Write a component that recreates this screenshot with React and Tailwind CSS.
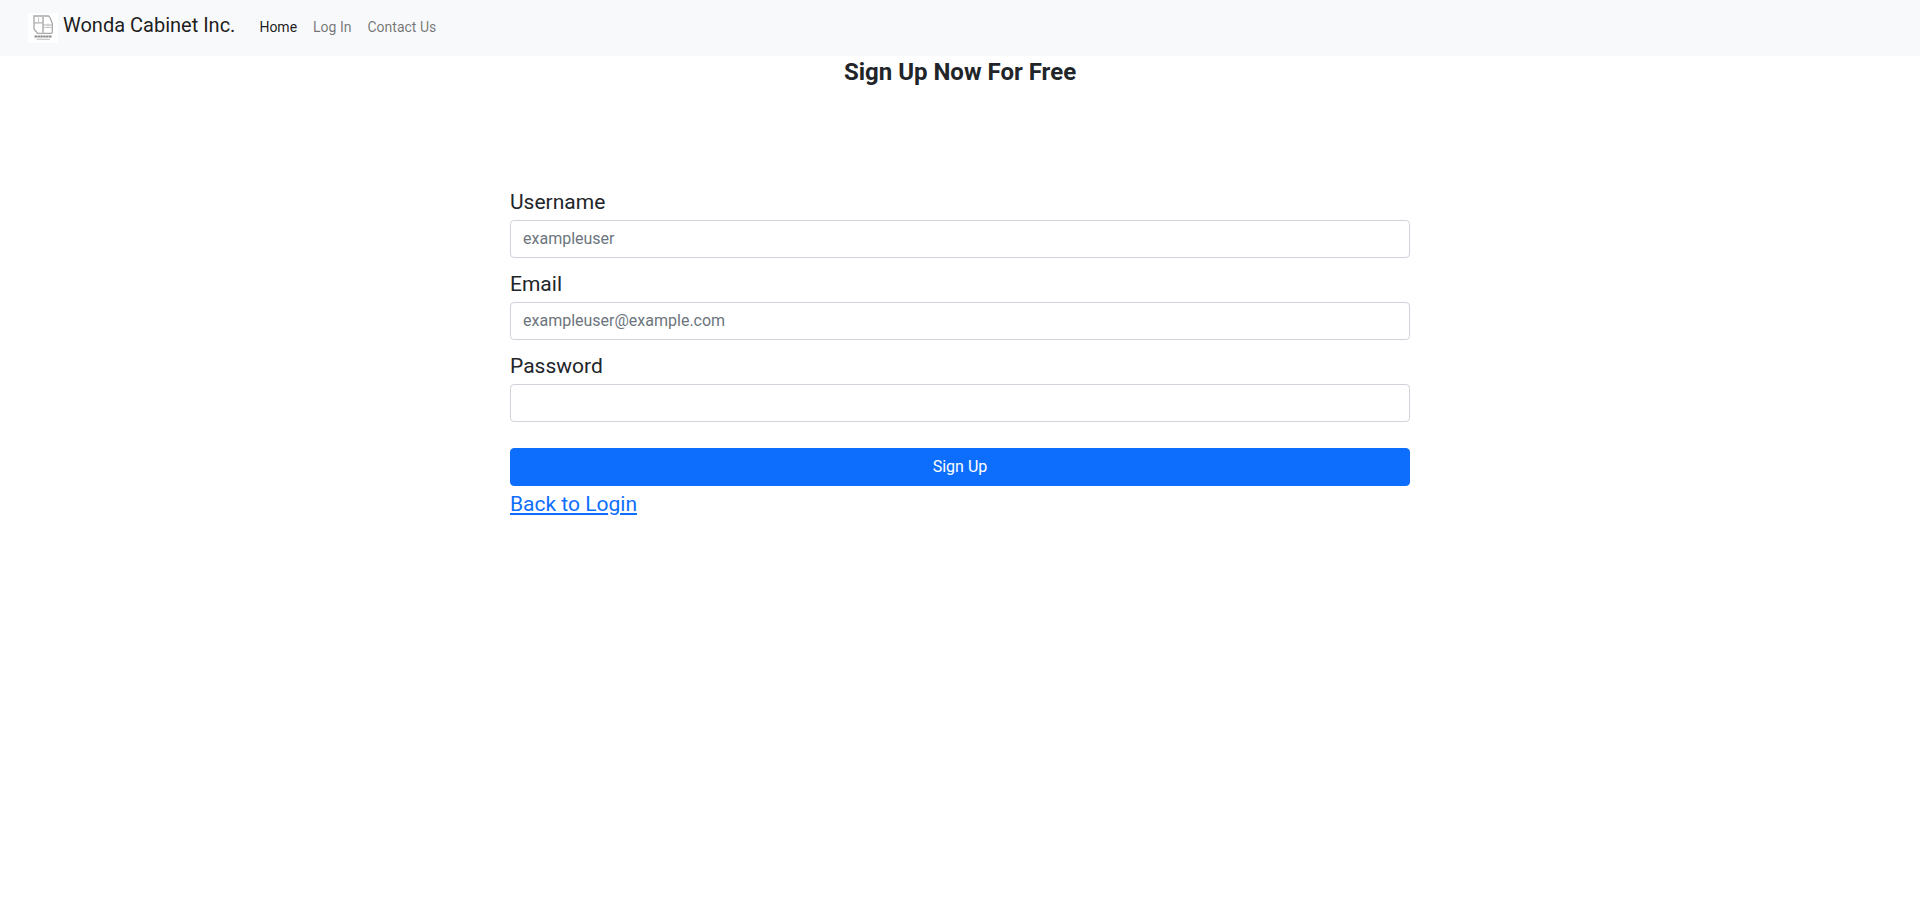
const fields = [
  { id: "username", label: "Username", type: "text", placeholder: "exampleuser" },
  { id: "email", label: "Email", type: "email", placeholder: "exampleuser@example.com" },
  { id: "password", label: "Password", type: "password", placeholder: "" },
];

function Logo() {
  return (
    <svg viewBox="0 0 30 30" className="size-[30px] shrink-0" aria-hidden="true">
      <rect width="30" height="30" fill="#fff" />
      <g fill="none">
        <path d="M6 3H20.500L22 4.500L24.300 10.500V19.500L23.300 20.400H9.500L6 16Z" stroke="#a8a8a8" strokeWidth="1.300" />
        <path d="M15 3v17.500" stroke="#c0c0c0" strokeWidth="2" />
        <path d="M6 9.800h8.500M15 12h9" stroke="#b0b0b0" strokeWidth="1.200" />
        <path d="M10.500 3v7M20 10.500v4M16 14.500h8" stroke="#c8c8c8" strokeWidth="1" />
      </g>
      <path d="M6.500 23.500h17.500" stroke="#8c8c8c" strokeWidth="1.800" strokeDasharray="2.500 0.400" />
      <path d="M8.500 26.300h13.500" stroke="#c4c4c4" strokeWidth="1.200" />
    </svg>
  );
}

export default function App() {
  return (
    <div className="font-[Roboto,sans-serif] text-base text-[#212529]">
      <nav className="flex h-14 items-center bg-[#f8f9fa] px-7">
        <a href="#home" className="mr-6 flex items-start gap-[5px] text-xl leading-6 text-black/90">
          <Logo />
          <span>Wonda Cabinet Inc.</span>
        </a>
        <div className="flex gap-4 pb-0.5 text-sm text-black/55">
          <a href="#home" className="text-black/90">Home</a>
          <a href="#login">Log In</a>
          <a href="#contact">Contact Us</a>
        </div>
      </nav>
      <main>
        <h1 className="text-center text-2xl font-bold">Sign Up Now For Free</h1>
        <form className="mx-auto mt-26 max-w-[900px]" onSubmit={(e) => e.preventDefault()}>
          {fields.map((f) => (
            <div key={f.id} className="mb-4">
              <label htmlFor={f.id} className="mb-2 block text-[21px] leading-5">{f.label}</label>
              <input
                id={f.id}
                type={f.type}
                placeholder={f.placeholder}
                className="block w-full rounded border border-[#ced4da] bg-white px-3 py-1.5 leading-6 placeholder:text-[#6c757d]"
              />
            </div>
          ))}
          <button type="submit" className="mt-[26px] block w-full rounded border border-[#0d6efd] bg-[#0d6efd] px-3 py-1.5 leading-6 text-white">
            Sign Up
          </button>
          <a href="#login" className="mt-1 inline-block text-[21px] leading-7 text-[#0d6efd] underline">Back to Login</a>
        </form>
      </main>
    </div>
  );
}
